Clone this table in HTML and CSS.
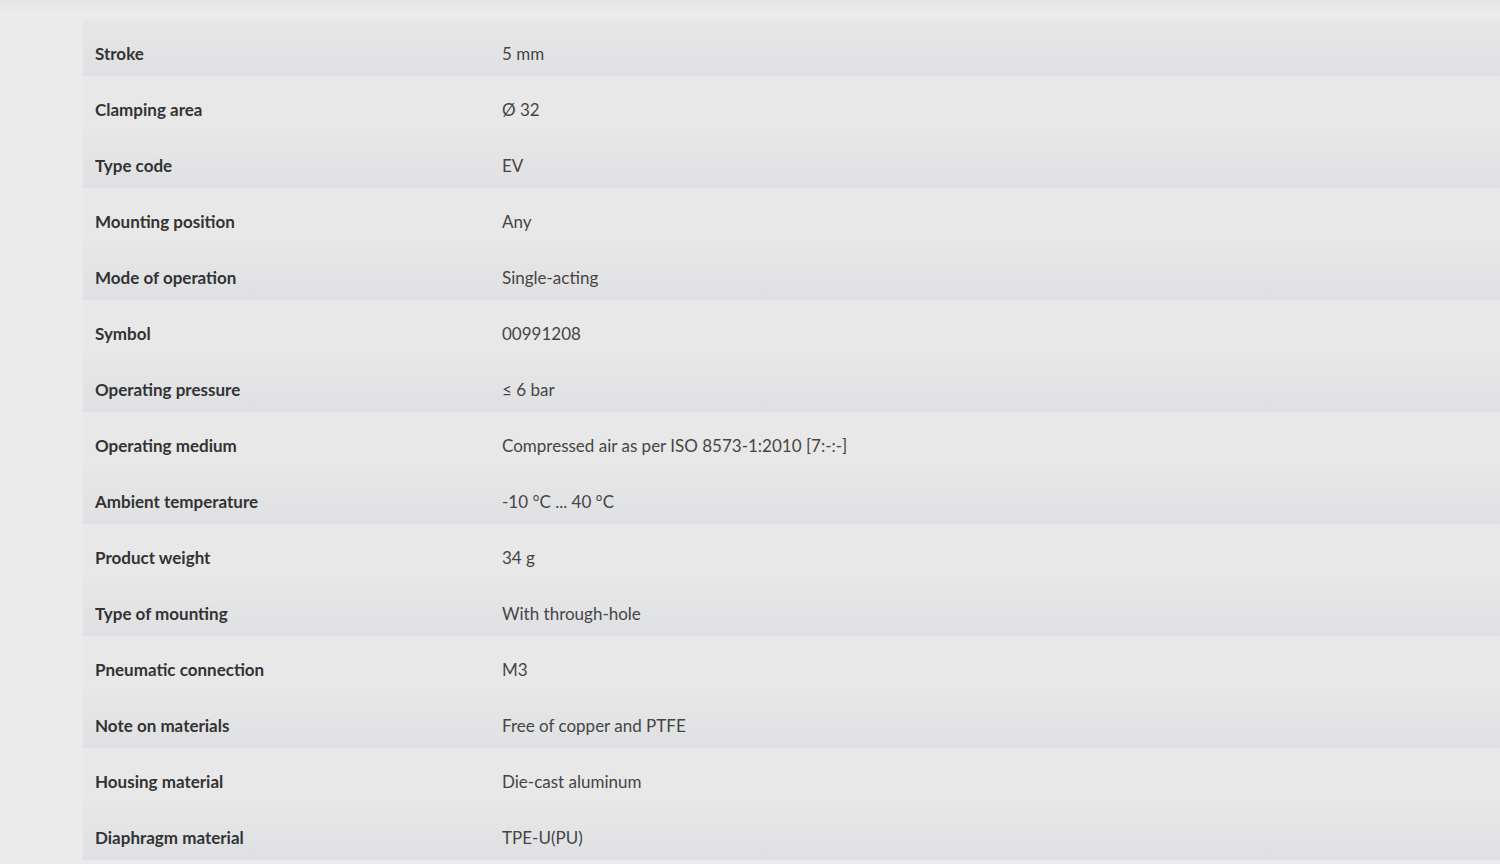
FILE: index.html
```html
<!DOCTYPE html>
<html lang="en">
<head>
<meta charset="utf-8">
<title>Technical data</title>
<link rel="stylesheet" href="styles.css">
</head>
<body>
<div class="page">
  <table class="specs">
    <tbody>
      <tr><th>Stroke</th><td>5 mm</td></tr>
      <tr><th>Clamping area</th><td>Ø 32</td></tr>
      <tr><th>Type code</th><td>EV</td></tr>
      <tr><th>Mounting position</th><td>Any</td></tr>
      <tr><th>Mode of operation</th><td>Single-acting</td></tr>
      <tr><th>Symbol</th><td>00991208</td></tr>
      <tr><th>Operating pressure</th><td>≤ 6 bar</td></tr>
      <tr><th>Operating medium</th><td>Compressed air as per ISO 8573-1:2010 [7:-:-]</td></tr>
      <tr><th>Ambient temperature</th><td>-10 °C ... 40 °C</td></tr>
      <tr><th>Product weight</th><td>34 g</td></tr>
      <tr><th>Type of mounting</th><td>With through-hole</td></tr>
      <tr><th>Pneumatic connection</th><td>M3</td></tr>
      <tr><th>Note on materials</th><td>Free of copper and PTFE</td></tr>
      <tr><th>Housing material</th><td>Die-cast aluminum</td></tr>
      <tr><th>Diaphragm material</th><td>TPE-U(PU)</td></tr>
    </tbody>
  </table>
</div>
</body>
</html>
```

FILE: styles.css
```css
html, body {
  margin: 0;
  padding: 0;
  background: #ebebeb;
}
body {
  font-family: Lato, "Liberation Sans", sans-serif;
  color: #3a3a3a;
  overflow: hidden;
}
.page {
  padding: 20px 0 0 83px;
  background: linear-gradient(#e6e6e6 0, #ebebeb 14px);
}
.specs {
  width: 100%;
  border-collapse: collapse;
}
.specs tr {
  height: 56px;
  background: #e8e8e8;
}
.specs tr:nth-child(odd) {
  background: linear-gradient(#e7e7e7, #dfe0e3);
}
.specs th,
.specs td {
  padding: 12px 12px 0 12px;
  text-align: left;
  vertical-align: middle;
  font-size: 17px;
  line-height: 20px;
}
.specs th {
  width: 383px;
  font-weight: 700;
  color: #333;
}
.specs td {
  font-weight: 400;
  color: #454545;
}
```
